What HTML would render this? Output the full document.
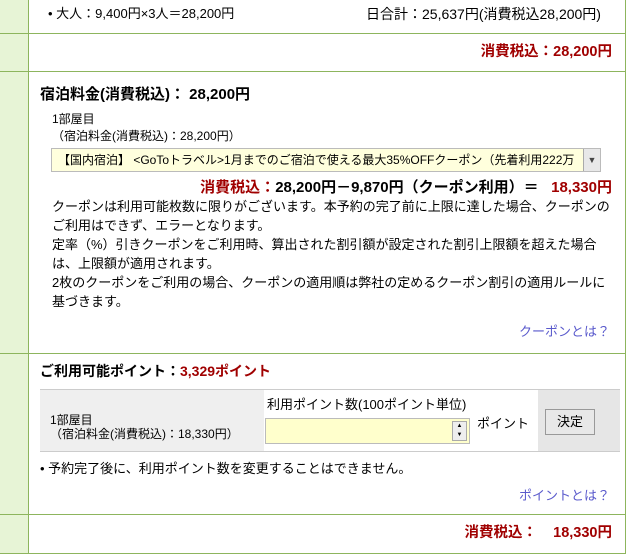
<!DOCTYPE html>
<html><head><meta charset="utf-8"><style>
body{margin:0;width:640px;height:557px;background:#fff;position:relative;overflow:hidden;font-family:"Liberation Sans","Noto Sans CJK JP",sans-serif;font-size:13px;color:#000}
.a{position:absolute;white-space:nowrap;line-height:16px}
.b{font-weight:bold;font-size:14.5px}
.r{color:#a00000}
.hl{position:absolute;left:0;width:626px;height:1px;background:#8db55d}
.lk{color:#5a5acc}
</style></head><body>
<div style="position:absolute;left:0;top:0;width:28px;height:553px;background:#e7f4d6"></div>
<div style="position:absolute;left:28px;top:0;width:1px;height:554px;background:#8db55d"></div>
<div style="position:absolute;left:625px;top:0;width:1px;height:554px;background:#8db55d"></div>
<div class="hl" style="top:33px"></div>
<div class="hl" style="top:71px"></div>
<div class="hl" style="top:353px"></div>
<div class="hl" style="top:514px"></div>
<div class="hl" style="top:553px"></div>

<div class="a" style="left:48px;top:6px">• 大人：9,400円×3人＝28,200円</div>
<div class="a" style="left:366px;top:6px;font-size:14px">日合計：25,637円(消費税込28,200円)</div>
<div class="a b r" style="right:28px;top:44px">消費税込：28,200円</div>

<div class="a b" style="left:40px;top:87px;font-size:15px">宿泊料金(消費税込)：&nbsp;28,200円</div>
<div class="a" style="left:52px;top:111px;font-size:12px">1部屋目</div>
<div class="a" style="left:52px;top:128px;font-size:12px">（宿泊料金(消費税込)：28,200円）</div>
<div style="position:absolute;left:51px;top:148px;width:548px;height:22px;border:1px solid #bbb;background:#ffffdd;overflow:hidden">
<div class="a" style="left:6px;top:3px;font-size:12px">【国内宿泊】 &lt;GoToトラベル&gt;1月までのご宿泊で使える最大35%OFFクーポン（先着利用222万</div>
<div style="position:absolute;right:0;top:0;width:16px;height:22px;background:#e8e8e8;border-left:1px solid #aaa;font-size:9px;text-align:center;line-height:22px;color:#444">▼</div></div>
<div class="a b" style="right:28px;top:180px;font-size:15px"><span class="r">消費税込：</span>28,200円－9,870円（クーポン利用）＝&nbsp;&nbsp;&nbsp;<span class="r">18,330円</span></div>
<div class="a" style="left:52px;top:199px">クーポンは利用可能枚数に限りがございます。本予約の完了前に上限に達した場合、クーポンの</div>
<div class="a" style="left:52px;top:218px">ご利用はできず、エラーとなります。</div>
<div class="a" style="left:52px;top:237px">定率（%）引きクーポンをご利用時、算出された割引額が設定された割引上限額を超えた場合</div>
<div class="a" style="left:52px;top:256px">は、上限額が適用されます。</div>
<div class="a" style="left:52px;top:275px">2枚のクーポンをご利用の場合、クーポンの適用順は弊社の定めるクーポン割引の適用ルールに</div>
<div class="a" style="left:52px;top:294px">基づきます。</div>
<div class="a lk" style="right:30px;top:324px">クーポンとは？</div>

<div class="a b" style="left:40px;top:363px;font-size:14px">ご利用可能ポイント：<span class="r">3,329ポイント</span></div>
<div style="position:absolute;left:40px;top:389px;width:580px;height:61px;border-top:1px solid #ccc;border-bottom:1px solid #ccc"></div>
<div style="position:absolute;left:40px;top:390px;width:224px;height:61px;background:#efefef"></div>
<div style="position:absolute;left:538px;top:390px;width:82px;height:61px;background:#e6e6e6"></div>
<div class="a" style="left:50px;top:413px;font-size:12px;line-height:14px">1部屋目<br>（宿泊料金(消費税込)：18,330円）</div>
<div class="a" style="left:267px;top:397px">利用ポイント数(100ポイント単位)</div>
<div style="position:absolute;left:265px;top:418px;width:203px;height:24px;border:1px solid #bbb;background:#ffffcc"></div>
<div style="position:absolute;left:452px;top:421px;width:13px;height:18px;background:#eee;border:1px solid #aaa;font-size:6px;line-height:9px;text-align:center">▲<br>▼</div>
<div class="a" style="left:477px;top:416px">ポイント</div>
<div style="position:absolute;left:545px;top:409px;width:48px;height:24px;border:1px solid #999;background:#e8e8e8;text-align:center;line-height:24px">決定</div>
<div class="a" style="left:40px;top:461px">• 予約完了後に、利用ポイント数を変更することはできません。</div>
<div class="a lk" style="right:30px;top:488px">ポイントとは？</div>
<div class="a b r" style="right:28px;top:525px">消費税込：&nbsp;&nbsp;&nbsp;&nbsp;18,330円</div>
</body></html>
